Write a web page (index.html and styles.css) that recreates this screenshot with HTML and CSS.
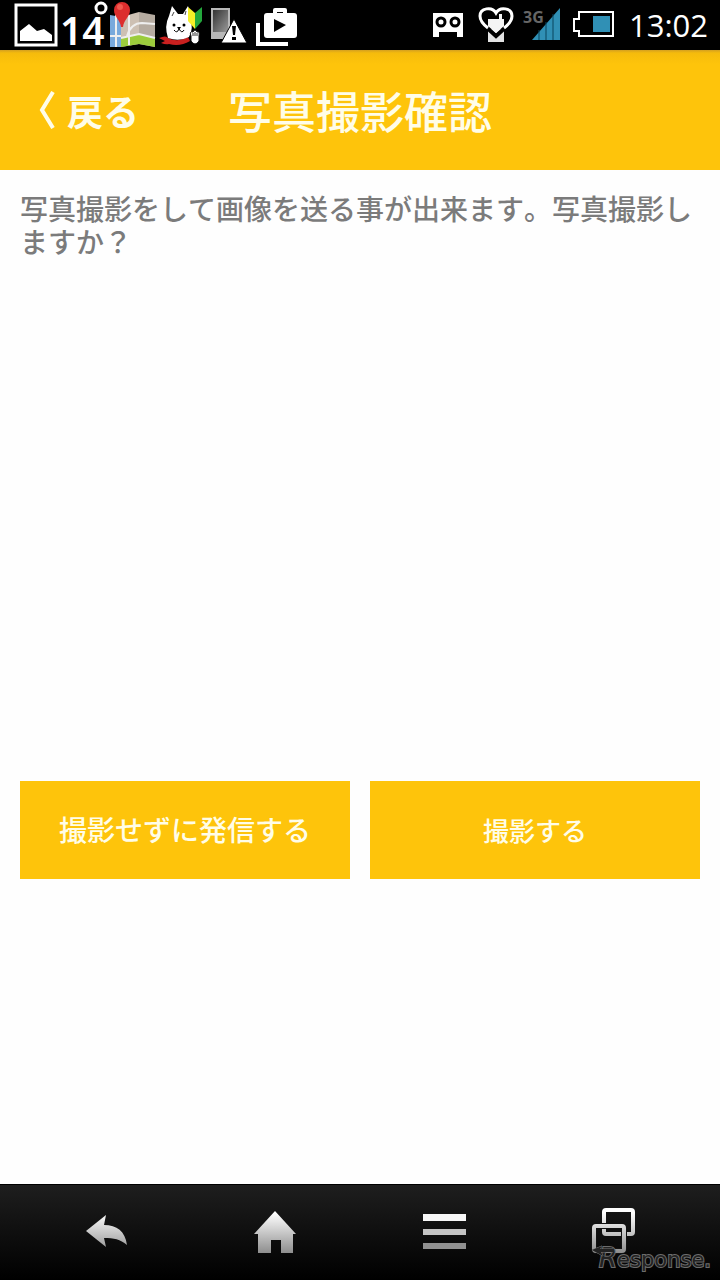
FILE: index.html
```
<!DOCTYPE html>
<html lang="ja">
	<head>
		<meta charset="utf-8">
		<meta name="viewport" content="width=device-width, initial-scale=1">
		<title>写真撮影確認</title>
		<link rel="stylesheet" href="styles.css">
	</head>
	<body>
		<div class="status-bar">
			<div class="notifications">
				<!-- screenshot saved -->
				<svg class="status-icon" viewBox="14 0 44 50">
					<rect x="16" y="5" width="40" height="40" fill="none" stroke="#fff" stroke-width="3"/>
					<path d="M20 41v-10l9-7 8 7 7-2 8 6v6z" fill="#fff"/>
				</svg>
				<!-- temperature -->
				<svg class="status-icon" viewBox="62 0 44 50">
					<text class="temperature" x="60" y="45">14</text>
					<circle cx="101" cy="8" r="5" fill="none" stroke="#fff" stroke-width="3"/>
				</svg>
				<!-- map -->
				<svg class="status-icon" viewBox="110 0 44 50">
					<path d="M110 15l11 2v30h-11z" fill="#78a9dc"/>
					<path d="M121 17l18-5v32l-18 3z" fill="#cdc0b3"/>
					<path d="M139 12l16 3v32l-16-3z" fill="#b5aba0"/>
					<path d="M121 38l18-4 16 4v9l-16-3-18 3z" fill="#9ccc3c"/>
					<path d="M110 36h11M116 15v32M121 38l18-4 16 4M127 36q4-13 15-13l13 1M129 15v30" fill="none" stroke="#eee" stroke-width="2"/>
					<path d="M121 27c-1-8-7-10-7-17a8 8 0 0 1 16 0c0 7-6 9-7 17z" fill="#dc2e2e"/>
					<circle cx="120" cy="7" r="3" fill="#f05a50"/>
				</svg>
				<!-- dog -->
				<svg class="status-icon" viewBox="158 0 44 50">
					<path d="M159 38q7-3 9 0 10 5 20-1l2 4q-10 6-21 3-3 1-8-1l4-2z" fill="#c9201f"/>
					<path d="M168 38q-4-12 1-22l3-10 6 8h5l5-8q2 6 2 12 4 10-1 19-10 5-21 1z" fill="#fff"/>
					<path d="M174 12l-2 4M186 11l-1 4" stroke="#444" stroke-width="1"/>
					<circle cx="174" cy="25" r="1.5"/>
					<circle cx="184" cy="25" r="1.5"/>
					<path d="M177 27h4l-2 3z"/>
					<path d="M174 30q3 4 5-1 3 5 5 1" fill="none" stroke="#000" stroke-width="1"/>
					<path d="M188 7l7 6v16l-7-8z" fill="#f5ef27"/>
					<path d="M202 7l-7 6v16l7-8z" fill="#23a73c"/>
					<path d="M191 36q-2-5 2-4 2-4 4 0 3-1 2 4v5q-4 6-8 0z" fill="#fff" stroke="#111" stroke-width="1"/>
					<path d="M193 33v3M195 32v4M197 33v3" stroke="#333" stroke-width="1"/>
				</svg>
				<!-- device warning -->
				<svg class="status-icon" viewBox="206 0 44 50">
					<defs>
						<linearGradient id="screen" x1="0" y1="0" x2="1" y2="1">
							<stop offset="0" stop-color="#333"/>
							<stop offset="1" stop-color="#999"/>
						</linearGradient>
					</defs>
					<rect x="211" y="8" width="19" height="31" fill="#b8b8b8"/>
					<rect x="213" y="10" width="15" height="22" fill="url(#screen)"/>
					<path d="M234 19l13 24h-26z" fill="#fff" stroke="#000" stroke-width="1"/>
					<path d="M232 26h4l-1 9h-2zM232 37h4v3h-4z"/>
				</svg>
				<!-- play movies -->
				<svg class="status-icon" viewBox="254 0 44 50">
					<path d="M258 23v21h30" fill="none" stroke="#fff" stroke-width="4"/>
					<rect x="264" y="13" width="33" height="25" rx="3" fill="#fff"/>
					<path d="M275 14v-4h10v4" fill="none" stroke="#fff" stroke-width="4" stroke-linejoin="round"/>
					<path d="M274 19v13l12-7z"/>
				</svg>
			</div>
			<div class="system">
				<!-- voicemail -->
				<svg class="status-icon narrow" viewBox="430 0 34 50">
					<path d="M432 13h30v24h-6v-5h-18v5h-6z" fill="#fff"/>
					<circle cx="440" cy="22" r="4" fill="none" stroke="#000" stroke-width="3"/>
					<circle cx="454" cy="22" r="4" fill="none" stroke="#000" stroke-width="3"/>
				</svg>
				<!-- heart -->
				<svg class="status-icon narrow" viewBox="477 0 34 50">
					<path d="M487 29h16v13h-16z" fill="#e3e3e3"/>
					<path d="M484 26l11 10 11-10" fill="none" stroke="#000" stroke-width="4"/>
					<path d="M487 28c-4-3-8-7-8-12 0-8 12-10 16-3 4-7 16-5 16 3 0 5-4 9-8 12" fill="none" stroke="#fff" stroke-width="3"/>
					<path d="M487 19h11v-5h3v5h2v7l-8 7-8-7z" fill="#f4f4f4"/>
				</svg>
				<!-- signal -->
				<svg class="status-icon narrow" viewBox="525 0 34 50">
					<text class="network" x="523" y="23">3G</text>
					<path d="M560 8v32h-28z" fill="#3090b5"/>
					<path d="M539 30v10M546 22v18M553 14v26" stroke="#09455c" stroke-width="1"/>
				</svg>
				<!-- battery -->
				<svg class="status-icon" viewBox="572 0 44 50">
					<path d="M579 12h34v24h-34v-5h-5v-12h5z" fill="none" stroke="#fff" stroke-width="2"/>
					<rect x="593" y="16" width="17" height="16" fill="#3090b5"/>
				</svg>
				<time class="clock">13:02</time>
			</div>
		</div>

		<header class="header">
			<a class="back" href="#">
				<svg class="chevron" viewBox="0 0 16 38"><path d="M14 1L3 19l11 18" fill="none" stroke="#fffde8" stroke-width="4"/></svg>
				戻る
			</a>
			<h1 class="title">写真撮影確認</h1>
		</header>

		<main class="content">
			<p class="message">写真撮影をして画像を送る事が出来ます。写真撮影しますか？</p>
			<div class="actions">
				<button class="button" type="button">撮影せずに発信する</button>
				<button class="button button-small" type="button">撮影する</button>
			</div>
		</main>

		<nav class="nav-bar">
			<svg class="defs" width="0" height="0">
				<defs>
					<linearGradient id="metal" gradientUnits="userSpaceOnUse" x1="0" y1="4" x2="0" y2="46">
						<stop offset="0" stop-color="#fff"/>
						<stop offset="1" stop-color="#888"/>
					</linearGradient>
				</defs>
			</svg>
			<button class="nav-button" type="button" aria-label="戻る">
				<svg class="nav-icon" viewBox="0 0 48 48">
					<path d="M4 22L24 6l-2 10c13 0 21 6 23 20-7-6-13-7-23-7l2 9z" fill="url(#metal)"/>
				</svg>
			</button>
			<button class="nav-button" type="button" aria-label="ホーム">
				<svg class="nav-icon" viewBox="0 0 48 48">
					<path d="M24 2l21 23h-3v19H30V31H20v13H7V25H3z" fill="url(#metal)"/>
				</svg>
			</button>
			<button class="nav-button" type="button" aria-label="メニュー">
				<svg class="nav-icon" viewBox="0 0 48 48">
					<path d="M2 5h43v7H2z" fill="#f8f8f8"/>
					<path d="M2 20h43v6H2z" fill="#c4c4c4"/>
					<path d="M2 34h43v6H2z" fill="#919191"/>
				</svg>
			</button>
			<button class="nav-button" type="button" aria-label="アプリ履歴">
				<svg class="nav-icon" viewBox="0 0 48 48">
					<rect x="14" y="1" width="29" height="24" rx="2" fill="none" stroke="url(#metal)" stroke-width="4"/>
					<rect x="4" y="17" width="30" height="25" rx="2" fill="none" stroke="#111" stroke-width="6"/>
					<rect x="4" y="17" width="30" height="25" rx="2" fill="none" stroke="url(#metal)" stroke-width="4"/>
				</svg>
			</button>
			<div class="watermark">
				<svg class="swoosh" viewBox="0 0 22 14"><path d="M1 5L11 1l-2 3h13v3H10l2 4z" fill="#222" stroke="#777" stroke-width="1"/></svg>
				<span class="initial">R</span>esponse.
			</div>
		</nav>
	</body>
</html>
```
FILE: styles.css
```
* {
	box-sizing: border-box;
}
body {
	margin: 0px;
	min-height: 100vh;
	display: flex;
	flex-direction: column;
	font-family: "Noto Sans CJK JP", sans-serif;
	background-color: #fefefe;
}
button {
	margin: 0px;
	padding: 0px;
	border: 0px;
	font-family: inherit;
}

/* Status bar */
.status-bar {
	display: flex;
	justify-content: space-between;
	height: 50px;
	padding: 0px 12px 0px 14px;
	background-color: #000;
}
.notifications {
	display: flex;
	gap: 4px;
}
.system {
	display: flex;
	gap: 13px;
}
.status-icon {
	width: 44px;
	height: 50px;
	overflow: visible;
}
.narrow {
	width: 34px;
}
.temperature {
	font: 600 39px "Noto Sans", sans-serif;
	fill: #fff;
}
.network {
	font: bold 16px "Open Sans", sans-serif;
	fill: #666;
}
.clock {
	font: 500 31px/50px "Open Sans", sans-serif;
	color: #fff;
}

/* Header */
.header {
	display: grid;
	grid-template-columns: 1fr auto 1fr;
	align-items: center;
	height: 120px;
	background: linear-gradient(#d4a020, #f5bb0c 3px, #fec40b 14px);
	color: #fffde8;
}
.back {
	display: flex;
	align-items: center;
	gap: 12px;
	padding-left: 39px;
	color: inherit;
	font-size: 36px;
	font-weight: 700;
	line-height: 48px;
	text-decoration: none;
	white-space: nowrap;
}
.chevron {
	width: 16px;
	height: 38px;
}
.title {
	margin: 0px;
	font-size: 44px;
	font-weight: 500;
	line-height: 60px;
}

/* Content */
.content {
	flex: 1;
	display: flex;
	flex-direction: column;
	padding: 22px 20px 305px;
}
.message {
	margin: 0px;
	color: #7b7b7b;
	font-size: 28px;
	font-weight: 500;
	font-kerning: none;
	line-height: 33px;
}
.actions {
	display: flex;
	gap: 20px;
	margin-top: auto;
}
.button {
	flex: 1;
	height: 98px;
	padding-bottom: 2px;
	background-color: #fec40b;
	color: #fffde8;
	font-size: 28px;
	font-weight: 500;
	cursor: pointer;
}
.button-small {
	font-size: 26px;
}

/* Navigation bar */
.nav-bar {
	position: relative;
	display: flex;
	height: 96px;
	padding: 0px 21px;
	background: linear-gradient(#1e1e1e, #000);
	border-top: 1px solid #000;
}
.defs {
	position: absolute;
}
.nav-button {
	flex: 1;
	display: flex;
	align-items: center;
	justify-content: center;
	background: none;
	cursor: pointer;
}
.nav-icon {
	width: 48px;
	height: 48px;
	overflow: visible;
}
.watermark {
	position: absolute;
	right: 9px;
	bottom: 8px;
	display: flex;
	align-items: baseline;
	font: 21px/24px "DejaVu Sans", sans-serif;
	color: #222;
	-webkit-text-stroke: 2px #6c6c6c;
	paint-order: stroke fill;
}
.initial {
	font-size: 26px;
	font-style: italic;
}
.swoosh {
	position: absolute;
	left: -8px;
	top: -1px;
	width: 22px;
	height: 14px;
}
```
